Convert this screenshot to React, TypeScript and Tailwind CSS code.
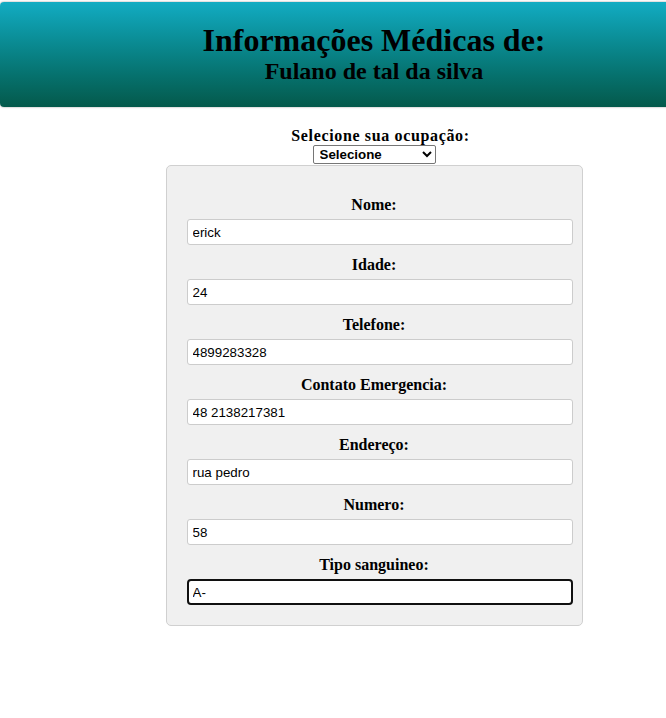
import { useState } from 'react';

const serif = { fontFamily: '"Liberation Serif", "Times New Roman", serif' };

const fieldsInit = [
  { id: 'nome', label: 'Nome:', value: 'erick' },
  { id: 'idade', label: 'Idade:', value: '24' },
  { id: 'telefone', label: 'Telefone:', value: '4899283328' },
  { id: 'contato', label: 'Contato Emergencia:', value: '48 2138217381' },
  { id: 'endereco', label: 'Endereço:', value: 'rua pedro' },
  { id: 'numero', label: 'Numero:', value: '58' },
  { id: 'sangue', label: 'Tipo sanguineo:', value: 'A-' },
];

export default function App() {
  const [fields, setFields] = useState(fieldsInit);

  const update = (id: string, value: string) => {
    setFields(fields.map((f) => (f.id === id ? { ...f, value } : f)));
  };

  return (
    <div className="min-h-screen bg-white text-black overflow-hidden" style={serif}>
      {/* Cabeçalho */}
      <header className="mt-[2px] w-[calc(100%+10px)] h-[105px] rounded-[4px] bg-gradient-to-b from-[#12acc3] to-[#04594b] shadow-[0_0_2px_rgba(0,0,0,0.45)] flex flex-col items-center pl-[72px] pt-[20px]">
        <h1 className="text-[32px] font-bold leading-[36px]">Informações Médicas de:</h1>
        <h2 className="text-[24px] font-bold leading-[26px]">Fulano de tal da silva</h2>
      </header>

      <main className="pl-[82px] flex flex-col items-center">
        <div className="mt-[20px] flex flex-col items-center">
          <label htmlFor="ocupacao" className="text-[16px] font-bold leading-[18px] tracking-[0.65px] pl-[13px]">
            Selecione sua ocupação:
          </label>
          <select
            id="ocupacao"
            className="w-[123px] h-[19px] border border-[#767676] rounded-[2px] bg-white text-[13.33px] font-bold px-[2px] leading-[15px]"
            style={{ fontFamily: '"Liberation Sans", Arial, sans-serif' }}
          >
            <option>Selecione</option>
            <option>Médico</option>
            <option>Enfermeiro</option>
            <option>Paciente</option>
          </select>
        </div>

        {/* Formulário */}
        <form className="mt-[1px] w-[417px] bg-[#f0f0f0] border border-[#d0d0d0] rounded-[5px] pl-[20px] pr-[9px] pt-[19px] pb-[20px]">
          {fields.map((f, i) => (
            <div key={f.id} className="flex flex-col">
              <label htmlFor={f.id} className="mt-[11px] mb-[5px] text-center text-[16px] font-bold leading-[18px] pr-[11px]">
                {f.label}
              </label>
              <input
                id={f.id}
                type="text"
                value={f.value}
                onChange={(e) => update(f.id, e.target.value)}
                className={
                  i === fields.length - 1
                    ? 'h-[26px] w-[386px] bg-white border-2 border-[#101010] rounded-[4px] px-[4px] text-[13.33px] outline-none'
                    : 'h-[26px] w-[386px] bg-white border border-[#cccccc] rounded-[3px] px-[5px] text-[13.33px] outline-none'
                }
                style={{ fontFamily: '"Liberation Sans", Arial, sans-serif' }}
              />
            </div>
          ))}
        </form>
      </main>
    </div>
  );
}
